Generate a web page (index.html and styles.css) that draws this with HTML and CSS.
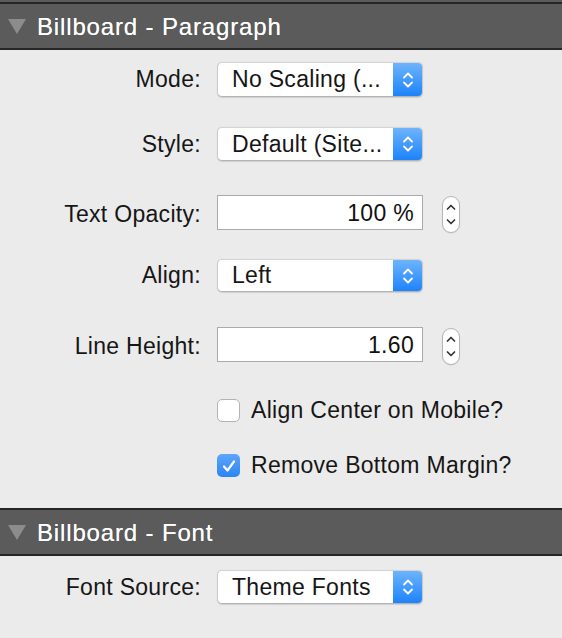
FILE: index.html
```html
<!DOCTYPE html>
<html>
<head>
<meta charset="utf-8">
<link rel="stylesheet" href="styles.css">
</head>
<body>
<div class="top-strip"></div>
<div class="panel-header">
  <span class="disclosure"></span>
  <span class="panel-title">Billboard - Paragraph</span>
</div>
<div class="panel-body para">
  <div class="row r-mode">
    <label class="lbl">Mode:</label>
    <div class="select"><span class="select-text">No Scaling (...</span><span class="select-arrow"><svg width="14" height="22" viewBox="0 0 14 22"><path d="M3 8.5 L7 4.5 L11 8.5 M3 13.5 L7 17.5 L11 13.5" fill="none" stroke="#fff" stroke-width="1.8" stroke-linecap="round" stroke-linejoin="round"/></svg></span></div>
  </div>
  <div class="row r-style">
    <label class="lbl">Style:</label>
    <div class="select"><span class="select-text">Default (Site...</span><span class="select-arrow"><svg width="14" height="22" viewBox="0 0 14 22"><path d="M3 8.5 L7 4.5 L11 8.5 M3 13.5 L7 17.5 L11 13.5" fill="none" stroke="#fff" stroke-width="1.8" stroke-linecap="round" stroke-linejoin="round"/></svg></span></div>
  </div>
  <div class="row r-opacity">
    <label class="lbl">Text Opacity:</label>
    <div class="field-wrap">
      <div class="field">100 %</div>
      <div class="stepper"><svg width="18" height="37" viewBox="0 0 18 37"><path d="M5.5 13 L9 9.5 L12.5 13 M5.5 24 L9 27.5 L12.5 24" fill="none" stroke="#333" stroke-width="1.7" stroke-linecap="round" stroke-linejoin="round"/></svg></div>
    </div>
  </div>
  <div class="row r-align">
    <label class="lbl">Align:</label>
    <div class="select"><span class="select-text">Left</span><span class="select-arrow"><svg width="14" height="22" viewBox="0 0 14 22"><path d="M3 8.5 L7 4.5 L11 8.5 M3 13.5 L7 17.5 L11 13.5" fill="none" stroke="#fff" stroke-width="1.8" stroke-linecap="round" stroke-linejoin="round"/></svg></span></div>
  </div>
  <div class="row r-lh">
    <label class="lbl">Line Height:</label>
    <div class="field-wrap">
      <div class="field">1.60</div>
      <div class="stepper"><svg width="18" height="37" viewBox="0 0 18 37"><path d="M5.5 13 L9 9.5 L12.5 13 M5.5 24 L9 27.5 L12.5 24" fill="none" stroke="#333" stroke-width="1.7" stroke-linecap="round" stroke-linejoin="round"/></svg></div>
    </div>
  </div>
  <div class="row r-cb1">
    <span></span>
    <div class="check-wrap"><span class="checkbox"></span><span class="check-label">Align Center on Mobile?</span></div>
  </div>
  <div class="row r-cb2">
    <span></span>
    <div class="check-wrap"><span class="checkbox checked"><svg width="22" height="22" viewBox="0 0 22 22"><path d="M6 11.5 L9.5 15.5 L16 6.5" fill="none" stroke="#fff" stroke-width="2.2" stroke-linecap="round" stroke-linejoin="round"/></svg></span><span class="check-label">Remove Bottom Margin?</span></div>
  </div>
</div>
<div class="panel-header">
  <span class="disclosure"></span>
  <span class="panel-title">Billboard - Font</span>
</div>
<div class="panel-body font">
  <div class="row r-font">
    <label class="lbl">Font Source:</label>
    <div class="select"><span class="select-text">Theme Fonts</span><span class="select-arrow"><svg width="14" height="22" viewBox="0 0 14 22"><path d="M3 8.5 L7 4.5 L11 8.5 M3 13.5 L7 17.5 L11 13.5" fill="none" stroke="#fff" stroke-width="1.8" stroke-linecap="round" stroke-linejoin="round"/></svg></span></div>
  </div>
</div>
</body>
</html>
```
FILE: styles.css
```css
html, body {
  margin: 0;
  padding: 0;
  background: #ebebeb;
  font-family: "Liberation Sans", Arial, sans-serif;
  color: #161616;
  overflow: hidden;
}
.top-strip {
  height: 2px;
  background: #5b5b5b;
}
.panel-header {
  height: 44px;
  background: #5b5b5b;
  border-top: 2px solid #262626;
  border-bottom: 2px solid #262626;
  display: flex;
  align-items: center;
  padding-left: 8px;
}
.disclosure {
  width: 0;
  height: 0;
  border-left: 9px solid transparent;
  border-right: 9px solid transparent;
  border-top: 15px solid #8c8c8c;
  margin-top: 1px;
}
.panel-title {
  margin-left: 11px;
  color: #ffffff;
  font-size: 24px;
  letter-spacing: 0.85px;
  margin-top: 1px;
  text-shadow: 0 0 0.4px rgba(255,255,255,0.8);
}
.panel-body {
  display: flex;
  flex-direction: column;
}
.panel-body.para {
  padding-top: 12px;
  padding-bottom: 33px;
}
.panel-body.font {
  padding-top: 14px;
  height: 69px;
}
.row {
  display: grid;
  grid-template-columns: 201px auto;
  column-gap: 16px;
  align-items: center;
}
.lbl {
  text-align: right;
  font-size: 23px;
  letter-spacing: 0.3px;
  white-space: nowrap;
}
.r-mode { height: 35px; }
.r-style { height: 34px; margin-top: 30px; }
.r-opacity { height: 35px; margin-top: 34px; }
.r-align { height: 33px; margin-top: 29px; }
.r-lh { height: 35px; margin-top: 35px; }
.r-cb1 { height: 23px; margin-top: 35px; }
.r-cb2 { height: 23px; margin-top: 32px; }
.r-font { height: 34px; }

.select {
  width: 206px;
  height: 100%;
  box-sizing: border-box;
  display: flex;
  background: #ffffff;
  border-radius: 5px;
  border: 1px solid #c9c9c9;
  border-top-color: #d4d4d4;
  border-bottom-color: #b3b3b3;
  box-shadow: 0 0.5px 1px rgba(0,0,0,0.12);
  overflow: hidden;
}
.select-text {
  flex: 1;
  padding-left: 14px;
  font-size: 23px;
  letter-spacing: 0.3px;
  display: flex;
  align-items: center;
  white-space: nowrap;
}
.select-arrow {
  width: 29px;
  background: linear-gradient(#6db4fb, #1d83fb);
  display: flex;
  align-items: center;
  justify-content: center;
}
.field-wrap {
  display: flex;
  align-items: flex-start;
  height: 100%;
}
.field {
  width: 206px;
  height: 35px;
  box-sizing: border-box;
  background: #ffffff;
  border: 1px solid #ababab;
  font-size: 23px;
  letter-spacing: 0.3px;
  text-align: right;
  padding-right: 8px;
  line-height: 34px;
  color: #111;
}
.stepper {
  width: 18px;
  height: 37px;
  box-sizing: border-box;
  margin-left: 19px;
  margin-top: 1px;
  background: #fff;
  border: 1px solid #b5b5b5;
  border-radius: 9px;
  display: flex;
  align-items: center;
  justify-content: center;
  overflow: hidden;
  box-shadow: 0 0.5px 1px rgba(0,0,0,0.1);
}
.stepper svg { flex: none; }
.check-wrap {
  display: flex;
  align-items: center;
  height: 100%;
}
.checkbox {
  width: 23px;
  height: 23px;
  box-sizing: border-box;
  border-radius: 5px;
  background: #ffffff;
  border: 1px solid #b3b3b3;
  display: flex;
  align-items: center;
  justify-content: center;
}
.checkbox.checked {
  border: none;
  background: linear-gradient(#5ea6f9, #2b84f6);
}
.check-label {
  margin-left: 11px;
  font-size: 23px;
  letter-spacing: 0.3px;
  white-space: nowrap;
}
```
